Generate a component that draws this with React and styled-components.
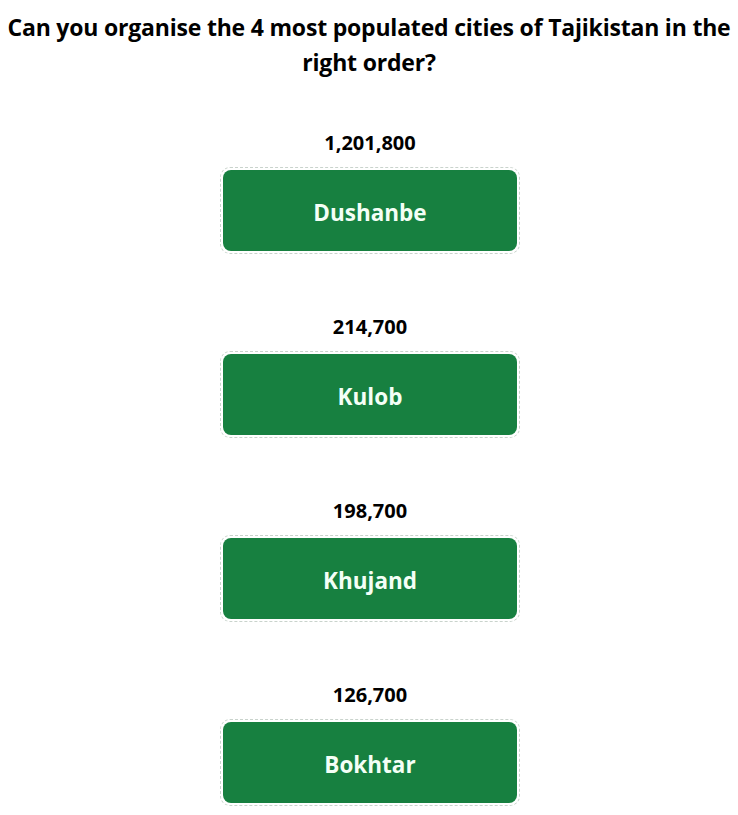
import React from "react";
import styled, { createGlobalStyle } from "styled-components";

const Global = createGlobalStyle`
  html, body { margin: 0; padding: 0; background: #fff; }
  body { font-family: "Open Sans", "Noto Sans", sans-serif; color: #000; }
`;

const Page = styled.main`
  display: flex;
  flex-direction: column;
  align-items: center;
  padding: 10px 4px 0;
`;

const Title = styled.h2`
  margin: 0;
  font-size: 23px;
  font-weight: 700;
  line-height: 35px;
  text-align: center;
  letter-spacing: -0.2px;
`;

const List = styled.ol`
  list-style: none;
  margin: 51px 0 0;
  padding: 0 0 0 2px;
  display: flex;
  flex-direction: column;
  align-items: center;
  gap: 61px;
`;

const Item = styled.li`
  display: flex;
  flex-direction: column;
  align-items: center;
  gap: 12px;
`;

const Count = styled.div`
  font-size: 20px;
  font-weight: 700;
  line-height: 24px;
`;

const Slot = styled.div`
  width: 300px;
  box-sizing: border-box;
  padding: 2px;
  border: 1px dashed #c9d3cc;
  border-radius: 10px;
`;

const City = styled.div`
  height: 81px;
  box-sizing: border-box;
  padding-top: 3px;
  border-radius: 8px;
  background: #178040;
  color: #f4fff6;
  display: flex;
  align-items: center;
  justify-content: center;
  font-size: 22.5px;
  font-weight: 700;
`;

const cities = [
  { name: "Dushanbe", pop: "1,201,800" },
  { name: "Kulob", pop: "214,700" },
  { name: "Khujand", pop: "198,700" },
  { name: "Bokhtar", pop: "126,700" },
];

export default function App() {
  return (
    <>
      <Global />
      <Page>
        <Title>
          Can you organise the 4 most populated cities of Tajikistan in the right order?
        </Title>
        <List>
          {cities.map((c) => (
            <Item key={c.name}>
              <Count>{c.pop}</Count>
              <Slot>
                <City>{c.name}</City>
              </Slot>
            </Item>
          ))}
        </List>
      </Page>
    </>
  );
}
